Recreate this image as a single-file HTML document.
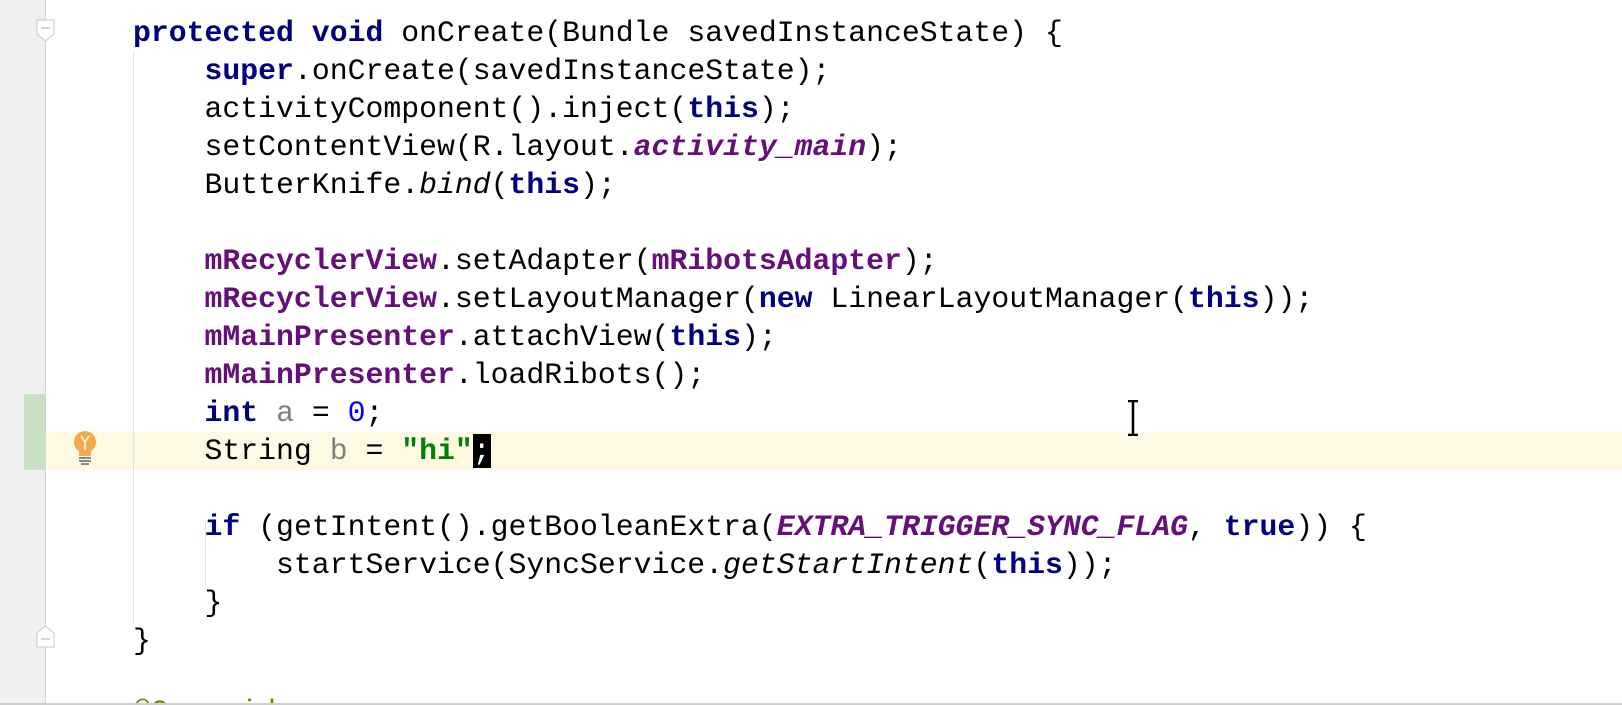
<!DOCTYPE html>
<html><head><style>
html,body{margin:0;width:1622px;height:705px;overflow:hidden;background:#fff}
body{position:relative;font-family:"Liberation Mono",monospace}
.g{position:absolute;left:0;top:0;width:45px;height:705px;background:#f0f0f0;border-right:1px solid #d5d5d5}
.l{position:absolute;left:133px;height:38px;line-height:38px;font-size:29.8px;white-space:pre;color:#000}
.k{color:#000080;font-weight:bold}
.f{color:#660e7a;font-weight:bold}
.fi{color:#660e7a;font-weight:bold;font-style:italic}
.i{font-style:italic}
.n{color:#0000ff}
.s{color:#008000;font-weight:bold}
.u{color:#808080}
.a{color:#808000}
</style></head><body>
<div class="g"></div>
<div style="position:absolute;left:46px;top:432px;width:1576px;height:38px;background:#fdf9e3"></div>
<div style="position:absolute;left:24px;top:394px;width:21px;height:76px;background:#c9dfc4"></div>
<div style="position:absolute;left:133px;top:52px;width:1px;height:572px;background:#e2e2e2"></div>
<div style="position:absolute;left:205px;top:520px;width:1px;height:65px;background:#e2e2e2"></div>
<svg style="position:absolute;left:36px;top:19px" width="20" height="24"><path d="M1 1H18V15L9.5 22L1 15Z" fill="#fff" stroke="#c8c8c8"/><path d="M5 9H14" stroke="#aaa"/></svg>
<svg style="position:absolute;left:36px;top:624px" width="20" height="24"><path d="M1 23H18V9L9.5 2L1 9Z" fill="#fff" stroke="#c8c8c8"/><path d="M5 15H14" stroke="#aaa"/></svg>
<svg style="position:absolute;left:70px;top:428px" width="30" height="40"><circle cx="15" cy="14" r="11" fill="#f5a94a"/><path d="M9 22H21V28H9Z" fill="#f5a94a"/><path d="M11 8L15 14L19 8M15 14V22" stroke="#fff" stroke-width="1.5" fill="none"/><rect x="9" y="29" width="12" height="2" fill="#888"/><rect x="9" y="32" width="12" height="2" fill="#888"/><rect x="11" y="35" width="8" height="2" fill="#888"/></svg>
<div style="position:absolute;left:0;top:0;width:1622px;height:703px;overflow:hidden">
<div class="l" style="top:-33px"><span class="a">@</span></div>
<div class="l" style="top:14px"><span class="k">protected void</span> onCreate(Bundle savedInstanceState) {</div>
<div class="l" style="top:52px">    <span class="k">super</span>.onCreate(savedInstanceState);</div>
<div class="l" style="top:90px">    activityComponent().inject(<span class="k">this</span>);</div>
<div class="l" style="top:128px">    setContentView(R.layout.<span class="fi">activity_main</span>);</div>
<div class="l" style="top:166px">    ButterKnife.<span class="i">bind</span>(<span class="k">this</span>);</div>
<div class="l" style="top:242px">    <span class="f">mRecyclerView</span>.setAdapter(<span class="f">mRibotsAdapter</span>);</div>
<div class="l" style="top:280px">    <span class="f">mRecyclerView</span>.setLayoutManager(<span class="k">new</span> LinearLayoutManager(<span class="k">this</span>));</div>
<div class="l" style="top:318px">    <span class="f">mMainPresenter</span>.attachView(<span class="k">this</span>);</div>
<div class="l" style="top:356px">    <span class="f">mMainPresenter</span>.loadRibots();</div>
<div class="l" style="top:394px">    <span class="k">int</span> <span class="u">a</span> = <span class="n">0</span>;</div>
<div class="l" style="top:432px">    String <span class="u">b</span> = <span class="s">"hi"</span><span style="background:#000;color:#fff">;</span></div>
<div class="l" style="top:508px">    <span class="k">if</span> (getIntent().getBooleanExtra(<span class="fi">EXTRA_TRIGGER_SYNC_FLAG</span>, <span class="k">true</span>)) {</div>
<div class="l" style="top:546px">        startService(SyncService.<span class="i">getStartIntent</span>(<span class="k">this</span>));</div>
<div class="l" style="top:584px">    }</div>
<div class="l" style="top:622px">}</div>
<div class="l" style="top:693px"><span class="a">@Override</span></div>
</div>
<div style="position:absolute;left:0;top:703px;width:1622px;height:2px;background:#cfcfcf"></div>
<svg style="position:absolute;left:1126px;top:400px" width="14" height="36"><path d="M2 1H12M7 1V35M2 35H12" stroke="#000" stroke-width="2.5" fill="none"/></svg>
</body></html>
